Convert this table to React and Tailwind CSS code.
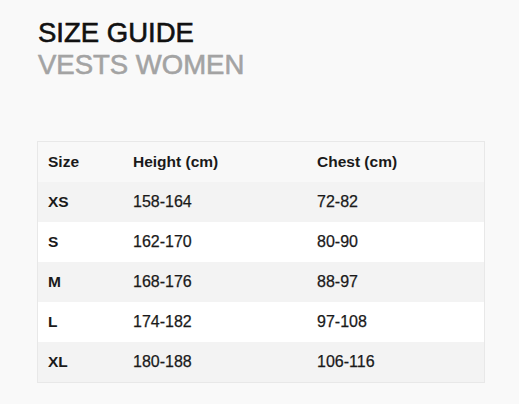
const rows = [
  ['XS', '158-164', '72-82'],
  ['S', '162-170', '80-90'],
  ['M', '168-176', '88-97'],
  ['L', '174-182', '97-108'],
  ['XL', '180-188', '106-116'],
];

export default function App() {
  return (
    <div className="w-[519px] h-[404px] bg-[#f9f9f9] pt-[17px] pl-[38px] font-['Liberation_Sans',Arial,sans-serif]">
      <h1 className="text-[27.5px] leading-[32px] text-[#111] [-webkit-text-stroke:0.6px_#111]">SIZE GUIDE</h1>
      <h2 className="text-[27.5px] leading-[32px] text-[#a3a3a3] [-webkit-text-stroke:0.6px_#a3a3a3]">VESTS WOMEN</h2>

      <div className="mt-[60px] -ml-px w-[448px] border border-[#e8e8e8]">
        <div className="grid grid-cols-[85px_184px_1fr] h-[40px] items-center bg-[#f8f8f8] text-[15.5px] font-bold text-[#1a1a1a]">
          <div className="pl-[10px]">Size</div>
          <div className="pl-[10px]">Height (cm)</div>
          <div className="pl-[10px]">Chest (cm)</div>
        </div>
        {rows.map(([size, height, chest], i) => (
          <div
            key={size}
            className={`grid grid-cols-[85px_184px_1fr] h-[40px] items-center text-[16px] text-[#1a1a1a] ${i % 2 === 0 ? 'bg-[#f3f3f3]' : 'bg-white'}`}
          >
            <div className="pl-[10px] font-bold text-[15.5px]">{size}</div>
            <div className="pl-[10px] [-webkit-text-stroke:0.25px_#1a1a1a]">{height}</div>
            <div className="pl-[10px] [-webkit-text-stroke:0.25px_#1a1a1a]">{chest}</div>
          </div>
        ))}
      </div>
    </div>
  );
}
